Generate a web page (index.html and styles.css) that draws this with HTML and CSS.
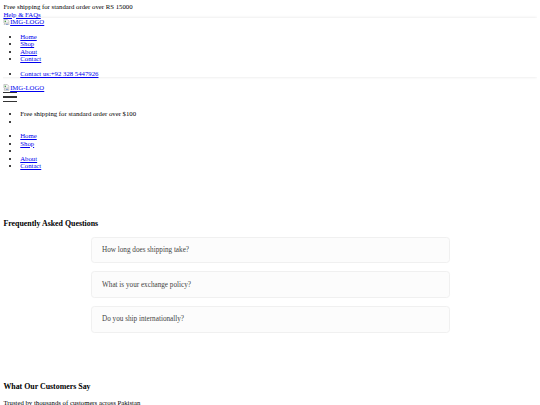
FILE: index.html
```html
<!DOCTYPE html>
<html lang="en">
<head>
    <meta charset="UTF-8">
    <meta name="viewport" content="width=device-width, initial-scale=1.0">
    <title>Shop - FAQs</title>
    <link rel="stylesheet" href="styles.css">
</head>
<body>
    <!-- Top bar -->
    <div class="top-bar">
        <div>Free shipping for standard order over RS 15000</div>
        <a href="#">Help &amp; FAQs</a>
    </div>

    <!-- Desktop header -->
    <header class="header-desktop">
        <a href="#" class="logo">
            <svg class="broken-img" viewBox="0 0 16 16"><path d="M2 1h8l4 4v4l-2 1-2-1-2 1-2-1-2 1-2-1z" fill="#f4f4f4" stroke="#8a8a8a"/><path d="M3 11l2 1 2-1 2 1 2-1 2 1 1-1v4H3z" fill="#f4f4f4" stroke="#8a8a8a"/><rect x="4" y="4" width="3" height="3" fill="#3c9a3c"/><rect x="8" y="12" width="3" height="2" fill="#3b6fd4"/></svg>IMG-LOGO</a>
        <ul class="menu">
            <li><a href="#">Home</a></li>
            <li><a href="#">Shop</a></li>
            <li><a href="#">About</a></li>
            <li><a href="#">Contact</a></li>
        </ul>
        <ul class="contact">
            <li><a href="#">Contact us:+92 328 5447926</a></li>
        </ul>
    </header>

    <!-- Mobile header -->
    <div class="header-mobile">
        <a href="#" class="logo">
            <svg class="broken-img" viewBox="0 0 16 16"><path d="M2 1h8l4 4v4l-2 1-2-1-2 1-2-1-2 1-2-1z" fill="#f4f4f4" stroke="#8a8a8a"/><path d="M3 11l2 1 2-1 2 1 2-1 2 1 1-1v4H3z" fill="#f4f4f4" stroke="#8a8a8a"/><rect x="4" y="4" width="3" height="3" fill="#3c9a3c"/><rect x="8" y="12" width="3" height="2" fill="#3b6fd4"/></svg>IMG-LOGO</a>
        <div class="hamburger">
            <span></span>
            <span></span>
            <span></span>
        </div>
    </div>

    <div class="menu-mobile">
        <ul>
            <li>Free shipping for standard order over $100</li>
            <li></li>
        </ul>
        <ul>
            <li><a href="#">Home</a></li>
            <li><a href="#">Shop</a></li>
            <li></li>
            <li><a href="#">About</a></li>
            <li><a href="#">Contact</a></li>
        </ul>
    </div>

    <!-- FAQ -->
    <section class="faq">
        <h3>Frequently Asked Questions</h3>
        <div class="faq-list">
            <div class="faq-item">How long does shipping take?</div>
            <div class="faq-item">What is your exchange policy?</div>
            <div class="faq-item">Do you ship internationally?</div>
        </div>
    </section>

    <!-- Testimonials -->
    <section class="testimonials">
        <h3>What Our Customers Say</h3>
        <p>Trusted by thousands of customers across Pakistan</p>
    </section>
</body>
</html>
```

FILE: styles.css
```css
body {
    font-family: "Liberation Serif", "Times New Roman", serif;
    font-size: 6.75px;
    line-height: 1.12;
    margin: 3.375px;
    color: #000;
}
a {
    color: #0000ee;
}
ul {
    padding-left: 16.875px;
}
.header-desktop {
    margin-left: -3.375px;
    padding-left: 3.375px;
    background-color: #fff;
    box-shadow: 0 0 3px rgba(0, 0, 0, 0.12);
}
.broken-img {
    width: 6.75px;
    height: 6.75px;
    vertical-align: -1px;
}
.hamburger {
    display: flex;
    flex-direction: column;
    gap: 3.2px;
    width: 13.5px;
    padding: 0.5px 0 1.4px;
}
.hamburger span {
    display: block;
    height: 1.2px;
    background-color: #333;
}
.faq {
    padding: 35.5px 0 33.75px;
}
.faq-list {
    max-width: 359px;
    margin: 0 auto;
}
.faq-item {
    font-size: 7.2px;
    color: #444;
    background-color: #fcfcfc;
    border: 1px solid #f0f0f0;
    border-radius: 3.4px;
    padding: 8.2px 10.5px;
    margin-bottom: 8.4px;
}
.testimonials p {
    margin-top: 6px;
}
```
